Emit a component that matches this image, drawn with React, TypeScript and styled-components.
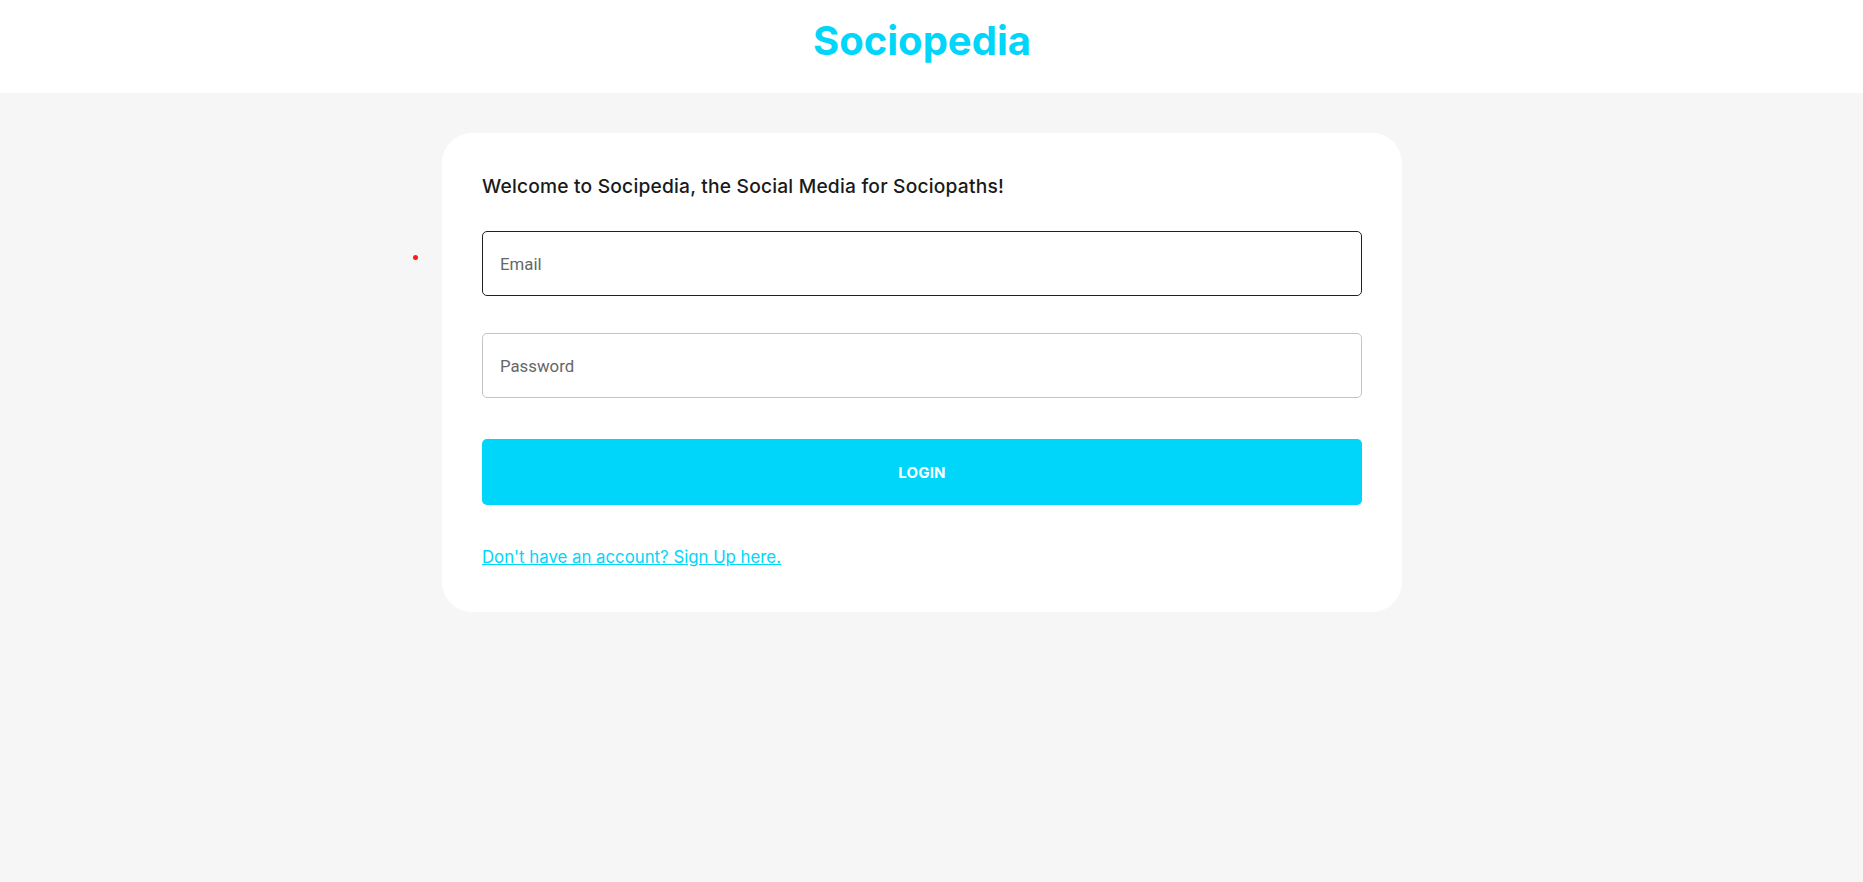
import styled, { createGlobalStyle } from "styled-components";

const GlobalStyle = createGlobalStyle`
  * {
    box-sizing: border-box;
  }
  body {
    margin: 0;
    background-color: #f6f6f6;
    font-family: "Inter", "Roboto", sans-serif;
  }
`;

const Page = styled.div`
  min-height: 882px;
  position: relative;
`;

const Header = styled.header`
  height: 93px;
  padding: 21px 19px 0 0;
  background-color: #ffffff;
  text-align: center;
`;

const Logo = styled.h1`
  margin: 0;
  font-size: 40px;
  line-height: 40px;
  font-weight: 700;
  color: #00d5fa;
`;

const Content = styled.div`
  padding: 40px 19px 0 0;
`;

const Card = styled.main`
  width: 960px;
  margin: 0 auto;
  padding: 41px 40px 45px;
  background-color: #ffffff;
  border-radius: 30px;
`;

const Welcome = styled.h5`
  margin: 0 0 33px;
  font-size: 19.2px;
  font-weight: 500;
  letter-spacing: 0.2px;
  line-height: normal;
  color: #1a1a1a;
`;

const Form = styled.form`
  display: flex;
  flex-direction: column;
`;

const Field = styled.input<{ $active?: boolean; $gap: number }>`
  height: 65px;
  margin-bottom: ${(p) => p.$gap}px;
  padding: 0 17px;
  border: 1px solid ${(p) => (p.$active ? "#212121" : "#c4c4c4")};
  border-radius: 5px;
  font-family: "Roboto", sans-serif;
  font-size: 16.8px;
  color: #1a1a1a;
  outline: none;
  &::placeholder {
    color: #666666;
    opacity: 1;
  }
`;

const LoginButton = styled.button`
  height: 66px;
  margin-bottom: 42px;
  border: none;
  border-radius: 5px;
  background-color: #00d5fa;
  color: #ffffff;
  font-family: "Inter", sans-serif;
  font-size: 15px;
  font-weight: 700;
  letter-spacing: 0.2px;
  cursor: pointer;
`;

const SignUpLink = styled.a`
  align-self: flex-start;
  font-size: 16.8px;
  line-height: normal;
  color: #00d5fa;
  text-decoration: underline;
  cursor: pointer;
`;

const Dot = styled.span`
  position: absolute;
  left: 413px;
  top: 255px;
  width: 5px;
  height: 5px;
  border-radius: 50%;
  background-color: #ff1a1a;
`;

const App = () => {
  return (
    <Page>
      <GlobalStyle />
      <Header>
        <Logo>Sociopedia</Logo>
      </Header>
      <Content>
        <Card>
          <Welcome>Welcome to Socipedia, the Social Media for Sociopaths!</Welcome>
          <Form onSubmit={(e) => e.preventDefault()}>
            <Field $active $gap={37} type="email" placeholder="Email" />
            <Field $gap={41} type="password" placeholder="Password" />
            <LoginButton type="submit">LOGIN</LoginButton>
            <SignUpLink>Don't have an account? Sign Up here.</SignUpLink>
          </Form>
        </Card>
      </Content>
      <Dot />
    </Page>
  );
};

export default App;
